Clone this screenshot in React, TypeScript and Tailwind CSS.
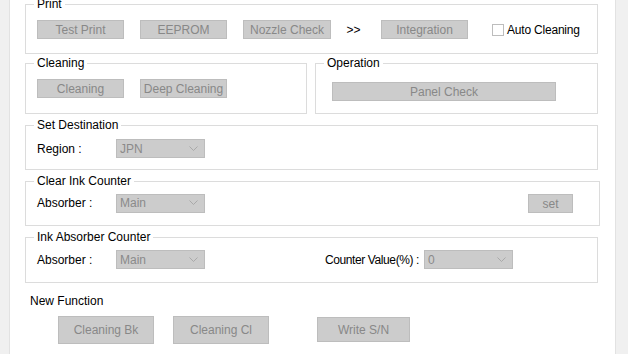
import React from 'react';
import clsx from 'clsx';

function Btn({ label, className }: { label: string; className?: string }) {
  return (
    <button
      className={clsx(
        'flex items-center justify-center bg-[#cccccc] border border-[#bdbdbd] text-[#888888] leading-none',
        className
      )}
    >
      {label}
    </button>
  );
}

function Select({ value, className }: { value: string; className?: string }) {
  return (
    <div
      className={clsx(
        'flex items-center justify-between bg-[#cccccc] border border-[#bdbdbd] text-[#8a8a8a] pl-[3px] pr-[6px] h-[19px] w-[89px]',
        className
      )}
    >
      <span>{value}</span>
      <svg width="9" height="6" viewBox="0 0 9 6" fill="none">
        <path d="M0.5 0.5 L4.5 4.5 L8.5 0.5" stroke="#a9a9a9" strokeWidth="1" />
      </svg>
    </div>
  );
}

function Group({
  title,
  className,
  children,
}: {
  title: string;
  className?: string;
  children?: React.ReactNode;
}) {
  return (
    <div className={clsx('relative border border-[#dcdcdc]', className)}>
      <span className="absolute -top-[8px] left-[8px] bg-white px-[3px] leading-[14px] text-black whitespace-nowrap">
        {title}
      </span>
      {children}
    </div>
  );
}

export default function App() {
  return (
    <div
      className="flex w-[628px] h-[354px] overflow-hidden bg-white text-[12px] text-black"
      style={{ fontFamily: '"Liberation Sans", Arial, sans-serif' }}
    >
      <div className="w-[10px] shrink-0 bg-[#f0f0f0] border-r border-[#e2e2e2]" />

      <div className="flex-1 flex flex-col pt-[4px] pl-[15px] pr-[17px]">
        {/* Print */}
        <Group title="Print" className="h-[50px] pt-[15px] pl-[11px]">
          <div className="flex items-center">
            <Btn label="Test Print" className="w-[87px] h-[19px]" />
            <Btn label="EEPROM" className="w-[87px] h-[19px] ml-[16px]" />
            <Btn label="Nozzle Check" className="w-[88px] h-[19px] ml-[16px]" />
            <span className="ml-[14px] w-[17px] text-center">&gt;&gt;</span>
            <Btn label="Integration" className="w-[87px] h-[19px] ml-[19px]" />
            <div className="ml-[24px] w-[12px] h-[12px] border border-[#bdbdbd] bg-white" />
            <span className="ml-[3px] tracking-[-0.2px]">Auto Cleaning</span>
          </div>
        </Group>

        {/* Cleaning + Operation */}
        <div className="flex gap-[8px] mt-[9px]">
          <Group title="Cleaning" className="w-[282px] h-[51px] pt-[15px] pl-[11px]">
            <div className="flex">
              <Btn label="Cleaning" className="w-[87px] h-[19px]" />
              <Btn label="Deep Cleaning" className="w-[87px] h-[19px] ml-[16px]" />
            </div>
          </Group>
          <Group title="Operation" className="flex-1 h-[51px] pt-[18px] pl-[16px]">
            <Btn label="Panel Check" className="w-[224px] h-[19px]" />
          </Group>
        </div>

        {/* Set Destination */}
        <Group title="Set Destination" className="h-[45px] mt-[11px] pt-[13px] pl-[11px]">
          <div className="flex items-center">
            <span className="w-[79px]">Region :</span>
            <Select value="JPN" />
          </div>
        </Group>

        {/* Clear Ink Counter */}
        <Group title="Clear Ink Counter" className="h-[45px] mt-[11px] -mr-[2px] pt-[11px] pl-[11px]">
          <div className="flex items-center">
            <span className="w-[79px]">Absorber :</span>
            <Select value="Main" />
            <Btn label="set" className="w-[45px] h-[19px] ml-auto mr-[26px] mt-[1px]" />
          </div>
        </Group>

        {/* Ink Absorber Counter */}
        <Group title="Ink Absorber Counter" className="h-[46px] mt-[11px] pt-[12px] pl-[11px]">
          <div className="flex items-center">
            <span className="w-[79px]">Absorber :</span>
            <Select value="Main" />
            <span className="ml-[120px] w-[99px] whitespace-nowrap tracking-[-0.4px]">Counter Value(%) :</span>
            <Select value="0" />
          </div>
        </Group>

        {/* New Function */}
        <div className="mt-[11px] pl-[5px] leading-[14px]">New Function</div>
        <div className="flex items-start mt-[8px] pl-[33px]">
          <Btn label="Cleaning Bk" className="w-[96px] h-[28px]" />
          <Btn label="Cleaning Cl" className="w-[96px] h-[28px] ml-[19px]" />
          <Btn label="Write S/N" className="w-[93px] h-[25px] ml-[48px] mt-[1px]" />
        </div>
      </div>

      <div className="w-[13px] shrink-0 bg-[#f0f0f0] border-l border-[#e2e2e2]" />
    </div>
  );
}
